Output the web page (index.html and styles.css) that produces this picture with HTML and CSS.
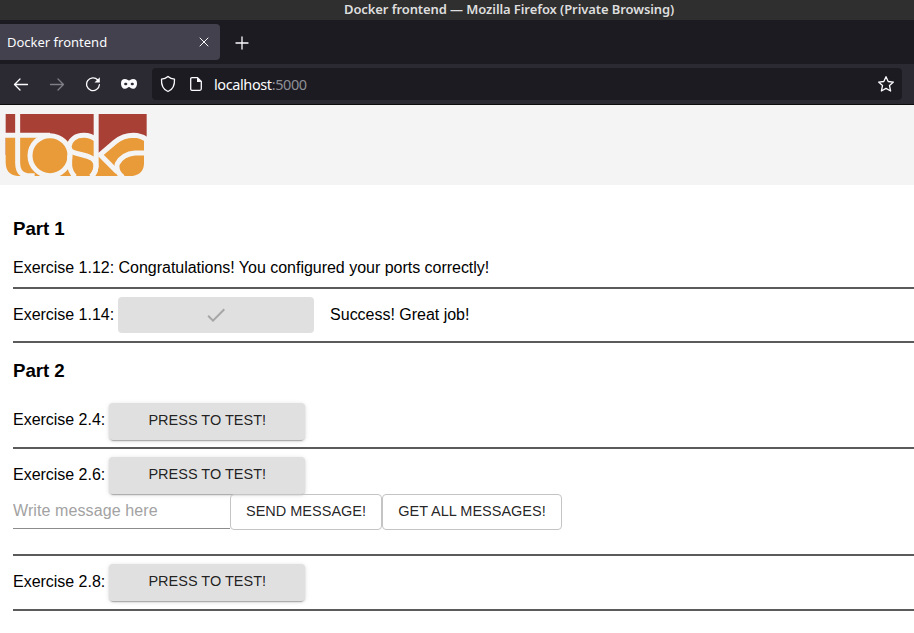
FILE: index.html
```html
<!DOCTYPE html>
<html lang="en">
<head>
<meta charset="utf-8">
<title>Docker frontend</title>
<link rel="stylesheet" href="styles.css">
</head>
<body>
<div class="titlebar"><span class="window-title">Docker frontend — Mozilla Firefox (Private Browsing)</span></div>
<div class="tabs">
  <div class="tab"><span class="tab-title">Docker frontend</span>
    <svg class="close" width="10" height="10" viewBox="0 0 10 10"><path d="M1 1l8 8M9 1l-8 8"/></svg>
  </div>
  <svg class="plus" width="14" height="14" viewBox="0 0 14 14"><path d="M7 1v12M1 7h12"/></svg>
</div>
<div class="toolbar">
  <svg class="nav" width="16" height="16" viewBox="0 0 16 16"><path d="M14.500 8.500H1.500M7 3L1.500 8.500L7 14"/></svg>
  <svg class="nav dim" width="16" height="16" viewBox="0 0 16 16"><path d="M1.500 8.500h13M9 3L14.500 8.500L9 14"/></svg>
  <svg class="nav" width="16" height="16" viewBox="0 0 16 16"><path d="M12.800 4A6.400 6.400 0 1 0 14.400 8.700"/><path class="solid" d="M14.800 1.200v5.300H9.500z"/></svg>
  <svg class="nav mask" width="18" height="16" viewBox="0 0 18 16"><path class="solid" fill-rule="evenodd" d="M5 3C7 3 8 4.500 9 4.500S11 3 13 3C16 3 17 4.500 17 7.500C17 10.500 15.500 12.800 13 12.800C11 12.800 10.200 11 9 11S7 12.800 5 12.800C2.500 12.800 1 10.500 1 7.500C1 4.500 2 3 5 3zM4 8C4.500 6.200 6.900 6.200 7.400 8C6.900 9.800 4.500 9.800 4 8zM10.600 8C11.100 6.200 13.500 6.200 14 8C13.500 9.800 11.100 9.800 10.600 8z"/></svg>
  <div class="urlbar">
    <svg class="shield" width="16" height="18" viewBox="0 0 16 18"><path d="M8 1.500C10 3.200 12.500 4 14.500 4.200C14.800 10.500 12.500 14.700 8 16.500C3.500 14.700 1.200 10.500 1.500 4.200C3.500 4 6 3.200 8 1.500z"/></svg>
    <svg class="page" width="14" height="16" viewBox="0 0 14 16"><path d="M3 1.700h5.500l3.800 3.800v7.300q0 1.500-1.500 1.500H3q-1.300 0-1.300-1.500V3Q1.700 1.700 3 1.700z"/><path class="solid" d="M8 1.500v4.500h4.500z"/></svg>
    <span class="url">localhost<span class="port">:5000</span></span>
    <svg class="star" width="18" height="18" viewBox="0 0 18 18"><path d="M9 1.700l2.200 4.800 5.200.6-3.900 3.500 1.100 5.400L9 13.400 4.400 16l1.100-5.400L1.600 7.100l5.200-.6z"/></svg>
  </div>
</div>
<header class="banner">
  <svg class="logo" width="142" height="62" viewBox="15 27 426 186">
    <path fill="#a94036" d="M17 27H440V101L400 94L297 150H17z"/>
    <path fill="#e99a39" d="M17 91H155Q184 91 205 110Q222 91 248 91Q278 91 285 105L297 150C340 115 356 91 400 91Q420 91 432 102V176Q430 213 388 213H53Q17 210 17 171z"/>
    <g fill="none" stroke="#f4f4f4" stroke-width="15">
      <path d="M15 91H150"/>
      <path d="M53 27V174Q53 209 82 212H104"/>
      <ellipse cx="150" cy="152" rx="60" ry="60"/>
      <path d="M287 103C268 87 236 88 221 100C203 115 203 136 220 142C240 149 262 151 276 160C292 172 293 196 274 215M209 150V182Q211 201 225 215"/>
      <path d="M288.500 27V175Q289 201 273 215"/>
      <path d="M297 152L345 111Q370 91 400 91Q426 92 441 105M299 148L352 201"/>
      <path d="M432 144H405C378 146 362 158 352 176Q346 200 369 217"/>
    </g>
  </svg>
</header>
<main>
  <h3 class="first">Part 1</h3>
  <div class="row r112">Exercise 1.12: Congratulations! You configured your ports correctly!</div>
  <div class="row r114"><span>Exercise 1.14:</span><button class="btn done" disabled><svg width="24" height="24" viewBox="0 0 24 24"><path d="M9 16.170L4.830 12l-1.420 1.410L9 19 21 7l-1.410-1.410z"/></svg></button><span class="result">Success! Great job!</span></div>
  <h3 class="second">Part 2</h3>
  <div class="row r24"><span>Exercise 2.4:</span><button class="btn">PRESS TO TEST!</button></div>
  <div class="row r26">
    <div class="line"><span>Exercise 2.6:</span><button class="btn">PRESS TO TEST!</button></div>
    <div class="form"><input class="message" placeholder="Write message here"><button class="outlined send">SEND MESSAGE!</button><button class="outlined all">GET ALL MESSAGES!</button></div>
  </div>
  <div class="row r28"><span>Exercise 2.8:</span><button class="btn">PRESS TO TEST!</button></div>
</main>
</body>
</html>
```
FILE: styles.css
```css
* { box-sizing: border-box; }
body { margin: 0; height: 633px; overflow: hidden; background: #fff; color: #000; font: 16px/20px "Liberation Sans", sans-serif; }
svg { display: block; flex: none; fill: none; stroke: #fbfbfe; stroke-width: 1.3; stroke-linecap: round; stroke-linejoin: round; }
.solid { fill: #fbfbfe; stroke: none; }
.titlebar { height: 20px; background: #2f2f2f; color: #dedede; font: 600 13px/19px "Noto Sans", sans-serif; display: flex; padding-left: 344px; }
.window-title { white-space: nowrap; letter-spacing: -.09px; }
.tabs { height: 44px; background: #1c1b22; display: flex; align-items: center; }
.tab { width: 220px; height: 36px; margin-top: -1px; background: #42414d; border-radius: 0 4px 4px 0; display: flex; align-items: center; justify-content: space-between; padding: 0 11px 0 7px; color: #fbfbfe; font: 13px/18px "Noto Sans", sans-serif; }
.close { stroke-width: 1; }
.plus { margin-left: 15px; margin-top: 1px; }
.toolbar { height: 41px; background: #2b2a33; border-bottom: 1px solid #0c0c0d; display: flex; align-items: center; padding: 0 12px 0 13px; }
.nav { margin-right: 20px; }
.dim { opacity: .4; }
.mask { margin-left: -1px; margin-right: 14px; }
.urlbar { flex: 1; height: 32px; background: #1c1b22; border-radius: 4px; display: flex; align-items: center; padding: 0 7px 0 8px; color: #fbfbfe; font: 14.5px/20px "Noto Sans", sans-serif; }
.page { margin: 0 11px 0 13px; }
.url { letter-spacing: -.4px; }
.port { color: #8f8f96; }
.star { margin-left: auto; }
.banner { height: 80px; background: #f4f4f4; padding: 9px 0 0 5px; }
.logo { stroke: none; }
.logo g { stroke-linecap: butt; }
main { padding-left: 13px; }
h3 { margin: 0; font-size: 18.720px; line-height: 22px; letter-spacing: -.05px; }
.first { padding-top: 33px; height: 71px; }
.second { padding-top: 17px; height: 51px; }
.row { border-bottom: 2px solid #5b5b5b; display: flex; align-items: center; letter-spacing: -.02px; }
.r112 { height: 33px; padding-bottom: 7px; }
.r114 { height: 54px; }
.r24 { height: 55px; padding-top: 2px; }
.r26 { height: 107px; display: block; padding-top: 8px; }
.r28 { height: 55px; }
.line, .form { display: flex; align-items: center; height: 37px; }
.form { height: 36px; }
.btn { width: 196px; height: 37px; margin-left: 4px; padding: 0 0 3px; border: 0; border-radius: 4px; background: #e0e0e0; color: rgba(0,0,0,.87); font: 14.5px/24px "Liberation Sans", sans-serif; box-shadow: 0 3px 1px -2px rgba(0,0,0,.2), 0 1px 2px rgba(0,0,0,.14), 0 1px 5px rgba(0,0,0,.12); }
.r24 span { margin-bottom: 4px; }
.line span, .r28 span { margin-bottom: 2px; }
.done { height: 36px; padding: 0; box-shadow: none; display: flex; align-items: center; justify-content: center; }
.done svg { fill: #a6a6a6; stroke: none; }
.result { margin-left: 16px; }
.message { width: 217px; height: 35px; margin-top: -1px; padding: 0; border: 0; border-bottom: 1px solid #8c8c8c; border-radius: 0; background: none; font: 16px/20px "Liberation Sans", sans-serif; letter-spacing: .1px; }
.message::placeholder { color: #a2a2a2; opacity: 1; }
.outlined { height: 36px; padding: 0 0 2px; border: 1px solid #c4c4c4; border-radius: 4px; background: transparent; color: rgba(0,0,0,.87); font: 14.5px/24px "Liberation Sans", sans-serif; white-space: nowrap; }
.send { width: 152px; }
.all { width: 180px; }
```
